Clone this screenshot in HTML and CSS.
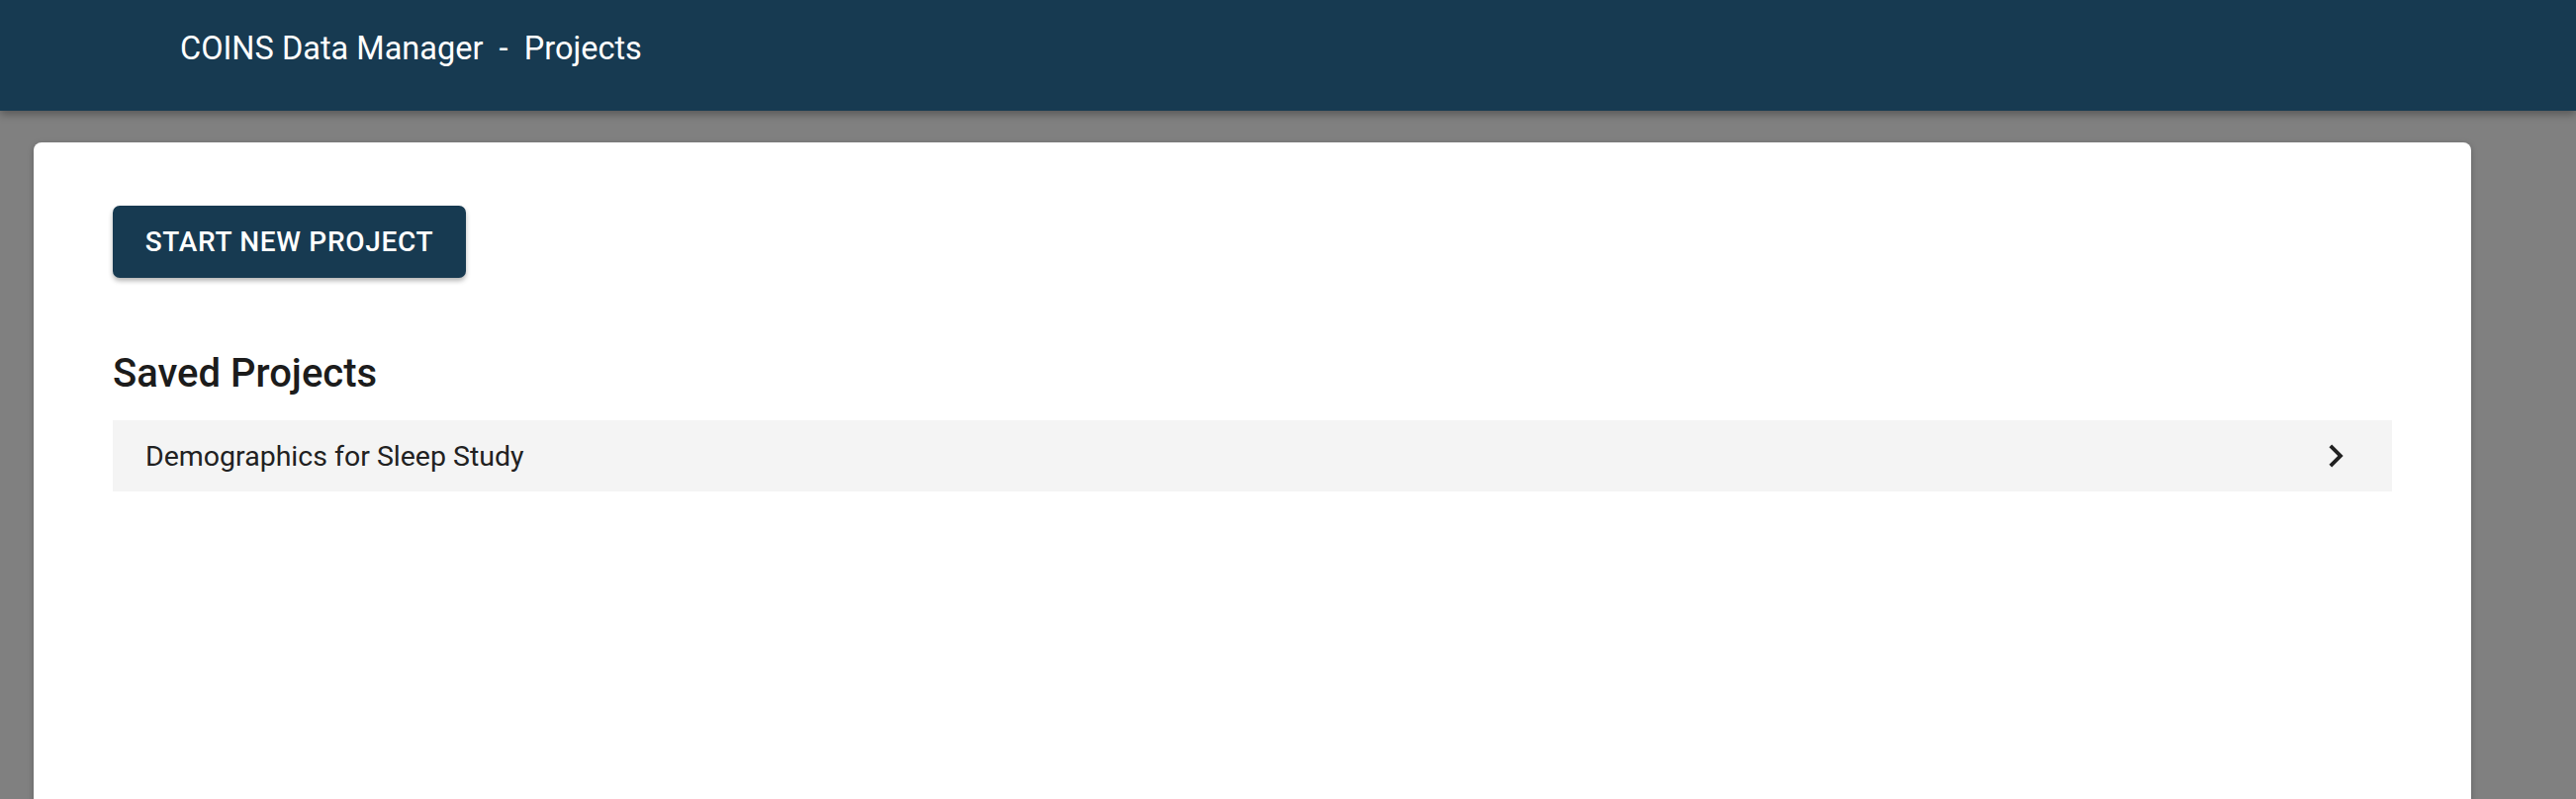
FILE: index.html
```html
<!DOCTYPE html>
<html lang="en">
<head>
  <meta charset="UTF-8">
  <meta name="viewport" content="width=device-width, initial-scale=1.0">
  <title>COINS Data Manager - Projects</title>
  <link rel="stylesheet" href="styles.css">
</head>
<body>
  <header class="app-bar">
    <h1 class="app-title">COINS Data Manager &nbsp;-&nbsp; Projects</h1>
  </header>

  <main class="page">
    <section class="card">
      <button type="button" class="btn-primary">Start New Project</button>

      <h2 class="section-title">Saved Projects</h2>
      <ul class="project-list">
        <li class="project-item">
          <span class="project-name">Demographics for Sleep Study</span>
          <svg class="chevron" viewBox="0 0 24 24" aria-hidden="true">
            <path d="M10 6 8.59 7.41 13.17 12l-4.58 4.59L10 18l6-6z"/>
          </svg>
        </li>
      </ul>
    </section>
  </main>
</body>
</html>
```

FILE: styles.css
```css
* {
    box-sizing: border-box;
}

html, body {
    height: 100%;
}

body {
    margin: 0;
    font-family: Roboto, "Noto Sans", Arial, sans-serif;
    background-color: #808080;
    color: #212121;
    overflow: hidden;
}

.app-bar {
    position: relative;
    z-index: 2;
    height: 112px;
    display: flex;
    align-items: center;
    padding: 0 0 15px 182px;
    background-color: #173a51;
    box-shadow: 0 4px 8px rgba(0, 0, 0, 0.3);
}

.app-title {
    margin: 0;
    font-size: 32.5px;
    font-weight: 400;
    color: #fff;
}

.page {
    padding: 32px 106px 0 34px;
}

.card {
    min-height: 900px;
    background-color: #fff;
    border-radius: 8px;
    padding: 64px 80px;
    box-shadow: 0 2px 6px rgba(0, 0, 0, 0.25);
}

.btn-primary {
    display: block;
    width: 357px;
    height: 73px;
    padding: 0;
    border: none;
    border-radius: 7px;
    background-color: #173a51;
    color: #fff;
    font-family: inherit;
    font-size: 28px;
    font-weight: 500;
    letter-spacing: 0.7px;
    text-transform: uppercase;
    cursor: pointer;
    box-shadow: 0 3px 5px rgba(0, 0, 0, 0.3);
}

.section-title {
    margin: 73px 0 0;
    font-size: 40px;
    font-weight: 500;
    line-height: 48px;
    color: #1c1c1c;
}

.project-list {
    list-style: none;
    margin: 23px 0 0;
    padding: 0;
}

.project-item {
    display: flex;
    align-items: center;
    justify-content: space-between;
    height: 72px;
    padding: 0 34px 0 33px;
    background-color: #f4f4f4;
}

.project-name {
    font-size: 28.5px;
}

.chevron {
    width: 46px;
    height: 46px;
    fill: #212121;
}
```
